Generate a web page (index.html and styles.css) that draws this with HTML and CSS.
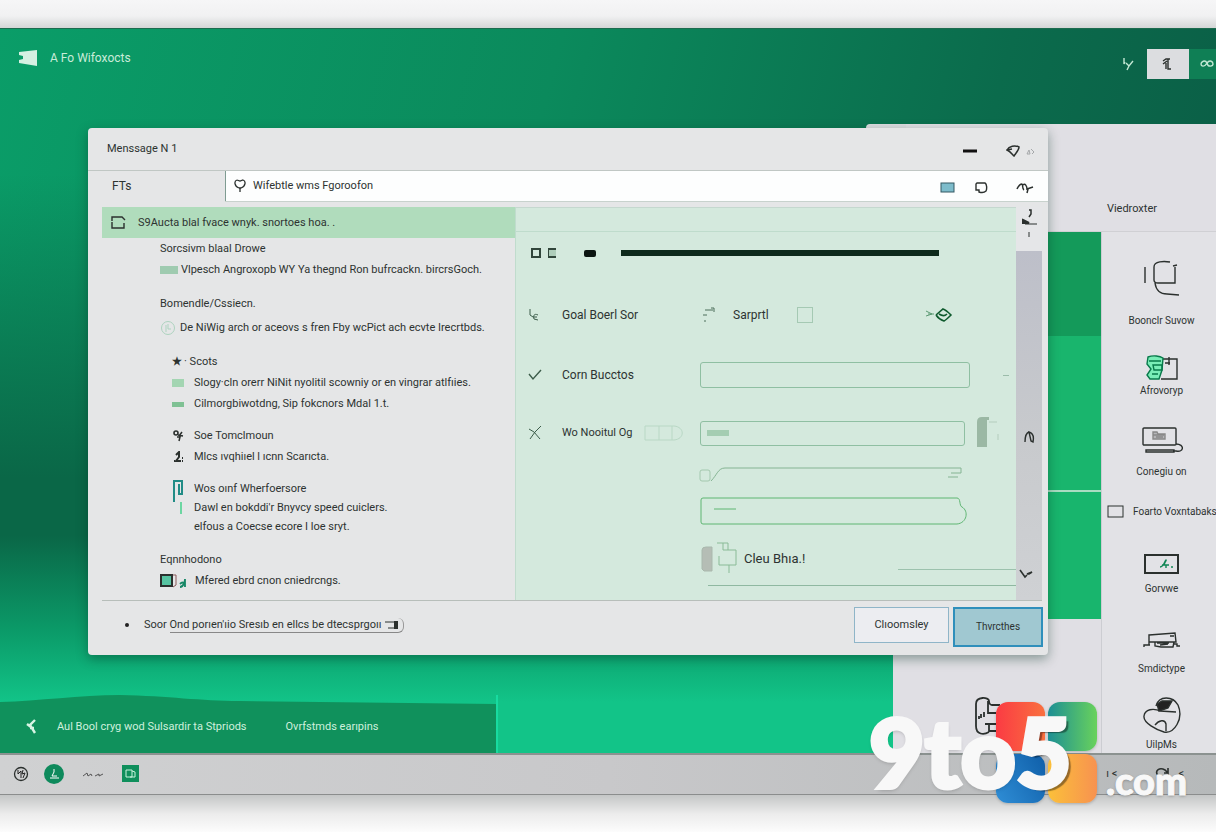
FILE: index.html
```html
<!DOCTYPE html>
<html lang="en">
<head>
<meta charset="utf-8">
<title>A Fo Wifoxocts</title>
<link rel="stylesheet" href="styles.css">
</head>
<body>
<main class="desk">
  <header class="desk-bar">
    <svg class="flag" width="20" height="16" viewBox="0 0 20 16"><path d="M1 2 19 0v16L1 13l0-3 4-1V6L1 5z" fill="#d5f0e2"/></svg>
    <span class="desk-title">A Fo Wifoxocts</span>
    <span class="spacer"></span>
    <button class="top-btn" aria-label="Check"><svg width="12" height="14" viewBox="0 0 12 14"><path d="M2 1v6l1-2M4 6l3 3 4-5M7 9l-2 4"/></svg></button>
    <button class="top-btn light" aria-label="Tools"><svg width="12" height="14" viewBox="0 0 12 14"><path d="M1 4l3-2h4M6 2v10h3M5 4l-4 3M4 6v6"/></svg></button>
    <button class="top-btn green" aria-label="Link"><svg width="14" height="12" viewBox="0 0 14 12"><path d="M7 5C5 1 1 4 1 6s3 4 6-1c3-4 6-1 6 1s-5 4-6-1"/></svg></button>
  </header>

  <section class="panel">
    <div class="panel-head"><span>Viedroxter</span></div>
    <div class="panel-left">
      <div class="tile tile-a"></div>
      <div class="tile tile-b"></div>
      <div class="item hidden-item">
        <svg width="30" height="38" viewBox="0 0 30 38"><path d="M26 8h-8c-1 0-3-1-3-4 0-4-13-5-13 3v22c0 9 8 9 13 6M14 4v12h8M11 27h14M15 27v7h10M5 19v3M7 17v4M10 20v-5" stroke-width="1.8"/></svg>
        <span>Hotxic</span>
      </div>
    </div>
    <div class="panel-right">
      <div class="item i1"><svg width="38" height="38" viewBox="0 0 38 38"><path d="M2 8v16M27 3c-6-1-16-1-16 5v13c0 2 1 3 4 3h17V8M30 7l4-1M12 24c1 7 5 11 12 11l12 1"/></svg><span>Boonclr Suvow</span></div>
      <div class="item i2"><svg width="34" height="26" viewBox="0 0 34 26"><path d="M16 4h16v20H16M24 2v8M20 8h5"/><path d="M3 2c5-2 12-1 15 1l-1 12-3 9H5l-3-4 4-6-4-5z" fill="#7aedb7" stroke="#087a4b"/><path d="M4 6h12M8 10h9v5H9zM7 19h6" stroke="#087a4b"/></svg><span>Afrovoryp</span></div>
      <div class="item i3"><svg width="42" height="28" viewBox="0 0 42 28"><rect x="2" y="2" width="33" height="17" rx="1"/><path d="M5 24h28v2H5zM35 18c9 0 8 9 0 7h-3"/><path d="M12 13V6h4l1 2h7v5zM12 9h11M15 11h7" stroke="#888" fill="#b5b5b8"/></svg><span>Conegiu on</span></div>
      <div class="wide"><svg width="18" height="13" viewBox="0 0 18 13"><rect x="1" y="1" width="15" height="11"/></svg><span>Foarto Voxntabaks</span></div>
      <div class="item i4"><svg width="36" height="20" viewBox="0 0 36 20"><rect x="1" y="1" width="33" height="18" stroke-width="2"/><path d="M16 13c4 0 5-7 6-7s-4 5 0 5v3M18 11h7M27 13h2" stroke="#118655"/></svg><span>Gorvwe</span></div>
      <div class="item i5"><svg width="38" height="20" viewBox="0 0 38 20"><path d="M6 4l26-2 1 9H6zM6 4v10M12 11v4l6 1h12l1-5M1 16v-2h6M31 13h3v2h3M14 12h12M27 5h4M17 14l8-1"/></svg><span>Smdictype</span></div>
      <div class="item i6"><svg width="40" height="38" viewBox="0 0 40 38"><path d="M14 10C17-1 31 0 36 9c6 14-4 29-14 27C15 34 1 27 2 20c1-7 9-8 17-5M13 29c4-5 10-6 11-1v7M18 15l16 1"/><path d="M15 8l5-3 10 0-4 7-9 3z" fill="#222"/></svg><span>UilpMs</span></div>
    </div>
  </section>

  <aside class="toast">
    <svg class="toast-shape" viewBox="0 0 497 58" preserveAspectRatio="none"><path d="M0 7C40 6 80 0 120 0c50 1 80 6 120 6l257 3v49H0z" fill="#10915c"/></svg>
    <svg class="toast-icon" width="14" height="16" viewBox="0 0 14 16"><path d="M10 1L5 6l5 8M2 5l4 3M5 9l4 0" stroke="#d8f5e4" stroke-width="2.4" fill="none"/></svg>
    <span>Aul Bool cryg wod Sulsardir ta Stpriods</span>
    <span class="toast-b">Ovrfstmds earıpins</span>
  </aside>

  <section class="dialog">
    <header class="title">
      <h1>Menssage N 1</h1>
      <button class="ic" aria-label="Minimize"><svg width="14" height="4" viewBox="0 0 14 4"><path d="M0 2h14" stroke="#111" stroke-width="3"/></svg></button>
      <button class="ic" aria-label="Filter"><svg width="15" height="12" viewBox="0 0 15 12"><path d="M1 5C3 1 9 0 13 2c0 3-3 6-5 9-2-2-4-5-7-6l5-1" stroke-width="1.5"/></svg></button>
      <button class="ic faint" aria-label="Home"><svg width="9" height="8" viewBox="0 0 9 8"><path d="M1 7l2-4 1 4H1M5 2l3 3-2 2"/></svg></button>
    </header>
    <div class="tools">
      <span class="tools-label">FTs</span>
      <label class="search">
        <svg width="12" height="14" viewBox="0 0 12 14"><path d="M5 9C0 7 0 2 3 1M3 1l3 1 3-1c3 1 3 6-2 8H5M6 9v4" stroke-width="1.3"/></svg>
        <input type="text" value="Wifebtle wms Fgoroofon" aria-label="Search">
      </label>
      <button class="ic" aria-label="Screen"><svg width="15" height="12" viewBox="0 0 15 12"><rect x="1" y="1" width="13" height="9" fill="#7dbccb" stroke="#345963"/></svg></button>
      <button class="ic" aria-label="Note"><svg width="13" height="12" viewBox="0 0 13 12"><path d="M2 1h8c2 1 2 6 1 8-2 2-4 2-7 1V8H1V2z" stroke-width="1.4"/></svg></button>
      <button class="ic" aria-label="Sign"><svg width="18" height="12" viewBox="0 0 18 12"><path d="M1 7c2-4 4-5 5-5s0 5 2 6M7 3c2-2 4 1 4 4l6-2M12 7l-1 4" stroke-width="1.5"/></svg></button>
    </div>

    <div class="body">
      <div class="tree">
        <div class="tree-head"><svg width="15" height="13" viewBox="0 0 15 13"><path d="M1 5V1h10l3 3M1 6v6h12V7" stroke-width="1.4"/></svg><span>S9Aucta blal fvace wnyk. snortoes hoa. .</span></div>
        <ul class="group"><li>Sorcsivm blaal Drowe</li><li><i class="bar"></i>Vlpesch Angroxopb WY Ya thegnd Ron bufrcackn. bircrsGoch.</li></ul>
        <ul class="group wide-gap"><li>Bomendle/Cssiecn.</li><li><svg class="clock" width="16" height="16" viewBox="0 0 16 16"><circle cx="8" cy="8" r="6.5"/><path d="M8 4v5h3M6 5v7"/></svg>De NiWig arch or aceovs s fren Fby wcPict ach ecvte Irecrtbds.</li></ul>
        <ul class="group in"><li><b class="star">★</b>· Scots</li><li><i class="bar mid"></i>Slogy·cln orerr NiNit nyolitil scowniy or en vingrar atlfıies.</li><li><i class="bar thin"></i>Cilmorgbiwotdng, Sip fokcnors Mdal 1.t.</li></ul>
        <ul class="group in"><li><svg class="gl" width="12" height="12" viewBox="0 0 12 12"><circle cx="4" cy="3" r="2" stroke-width="1.6"/><path d="M7 6l3-4M6 5l5 1M5 7l3 0-1 4" stroke-width="1.5"/></svg>Soe Tomclmoun</li><li><svg class="gl" width="12" height="12" viewBox="0 0 12 12"><path d="M4 4l3-3v5L4 10h5M2 10h1M10 7h1M10 10h1" stroke-width="2"/></svg>Mlcs ıvqhiıel l ıcnn Scarıcta.</li></ul>
        <ul class="group in tight"><li><svg class="flagp" width="12" height="24" viewBox="0 0 12 24"><path d="M2 23V2h8v13H7V5" stroke="#218c86" stroke-width="2"/></svg>Wos oınf Wherfoersore</li><li><i class="tick"></i>Dawl en bokddi'r Bnyvcy speed cuiclers.</li><li>elfous a Coecse ecore I loe sryt.</li></ul>
        <ul class="group last"><li>Eqnnhodono</li><li><svg class="sq" width="27" height="15" viewBox="0 0 27 15"><rect x="1" y="1" width="11" height="11" fill="#56c3a1" stroke-width="2"/><path d="M13 1h3v10l-3 2" stroke="#8a5a5a"/><path d="M20 13c4 0 5-7 5-8v8M20 10c2-2 3-2 4 0" stroke="#168766" stroke-width="1.8"/></svg>Mfered ebrd cnon cniedrcngs.</li></ul>
      </div>

      <form class="form">
        <div class="strip"></div>
        <div class="bars"><i class="bx"></i><i class="bx pale"></i><i class="blk"></i><i class="line"></i></div>
        <div class="row">
          <svg class="lead" width="12" height="14" viewBox="0 0 12 14"><path d="M2 1v6l3 2M10 7c-4-2-5 1-4 4l4 1M5 9h4"/></svg>
          <label for="c1">Goal Boerl Sor</label>
          <div class="ctl split"><svg width="16" height="16" viewBox="0 0 16 16"><path d="M5 3h8M11 1h3v4M3 8h4M4 14h2" stroke="#4d6f5b"/></svg><label for="c1" class="mid-l">Sarprtl</label><input type="checkbox" id="c1" class="check"><svg class="eye" width="28" height="16" viewBox="0 0 28 16"><path d="M1 4l6 3-6 2M3 7h6" stroke="#5b9973"/><path d="M11 8l7-6c3 1 6 4 8 6-3 3-5 5-7 6-3-1-6-3-8-6M14 7c3 2 6 2 8 0" stroke-width="1.6" stroke="#0e5a2d"/></svg></div>
        </div>
        <div class="row">
          <svg class="lead" width="14" height="12" viewBox="0 0 14 12"><path d="M1 5l4 5 8-9" stroke-width="1.4"/></svg>
          <label for="t1">Corn Bucctos</label>
          <div class="ctl"><input id="t1" class="text" type="text"></div><i class="dash"></i>
        </div>
        <div class="row r3">
          <svg class="lead" width="14" height="16" viewBox="0 0 14 16"><path d="M1 4l5 3 6 7M13 1L7 7l-5 7"/></svg>
          <label for="t2">Wo Nooitul Og<svg class="pill" width="40" height="16" viewBox="0 0 40 16"><path d="M1 1h29c11 1 11 13 0 14H1zM15 1v14M28 1v14"/></svg></label>
          <div class="ctl"><input id="t2" class="text" type="text"><i class="fill"></i></div>
          <svg class="knob" width="24" height="34" viewBox="0 0 24 34"><path d="M1 31V6q0-5 5-5h7v3h-2v27z" fill="#9bb8a4"/><path d="M13 6h8M22 18v6" stroke="#b4cdbd"/></svg>
        </div>
        <svg class="tabline" viewBox="0 0 266 16" preserveAspectRatio="none"><rect x="1" y="3" width="10" height="11" rx="2" stroke="#a3c8ae"/><path d="M12 14C18 8 19 1 26 1h236v5h-10M249 10h10" stroke="#85b493"/></svg>
        <div class="odd"><svg viewBox="0 0 270 28" preserveAspectRatio="none"><path d="M3 1h254c4 0 2 8 5 9 7 4 5 16-5 17H3q-2 0-2-2V3q0-2 2-2M14 12h22" stroke="#5fb673"/></svg></div>
        <div class="foot-row"><svg width="38" height="34" viewBox="0 0 38 34"><path d="M2 27V8q0-3 4-3h6v24H4z" fill="#b5bdb5" stroke="#a9b8ad"/><path d="M17 1h11v7h8v15H19v-9M23 1v7h5M29 23v8" stroke="#8abb97"/></svg><span>Cleu Bhıa.!</span></div>
        <div class="rules"></div>
      </form>

      <div class="scroll">
        <svg width="18" height="36" viewBox="0 0 18 36"><path d="M3 13l6 3H3z" fill="#222" stroke-width="2"/><path d="M9 3h2v4l-2 3" stroke-width="1.5"/><path d="M5 17h12M9 25v5"/></svg>
        <svg class="s2" width="12" height="14" viewBox="0 0 12 14"><path d="M2 12C2 6 3 3 6 2M6 2c4 1 5 5 4 10l-2-1z" stroke-width="1.4"/></svg>
        <svg class="s3" width="16" height="10" viewBox="0 0 16 10"><path d="M1 1l5 7 2-2M8 5l5-2-3 2z" stroke-width="1.6"/></svg>
      </div>
    </div>

    <footer class="foot">
      <span class="dot"></span>
      <span class="note">Soor <u>Ond porıen'ıio Sresıb en ellcs be dtecsprgoıı<svg width="14" height="8" viewBox="0 0 14 8"><path d="M0 1h11v6H3"/><path d="M11 0v8" stroke-width="4"/></svg></u></span>
      <button class="btn" type="button">Clıoomsley</button>
      <button class="btn primary" type="button">Thvrcthes</button>
    </footer>
  </section>
</main>

<nav class="taskbar">
  <svg width="16" height="16" viewBox="0 0 16 16"><circle cx="8" cy="8" r="6.5" stroke-width="1.3"/><path d="M5 4v4l3-3v7M10 4l-1 4 3-1-2 5" stroke="#222"/></svg>
  <span class="round"><svg width="12" height="12" viewBox="0 0 12 12"><path d="M6 1v3L4 8h5M2 10h9" stroke="#fff"/></svg></span>
  <svg width="22" height="6" viewBox="0 0 22 6"><path d="M1 5l4-3 1 3 3-2 1 2M13 5l4-2v2l4-2" stroke="#555"/></svg>
  <span class="app"><svg width="11" height="10" viewBox="0 0 11 10"><path d="M1 1h6v7H1zM7 2l3 1v5H5" stroke="#c8f3dc"/></svg></span>
  <span class="spacer"></span>
  <span class="tray">ı &lt;</span>
  <svg width="16" height="14" viewBox="0 0 16 14"><path d="M3 9C-1 3 5 0 10 3l3 3V1M13 6H9M6 8c-2 4 4 4 6 1" stroke-width="1.6"/></svg>
  <span class="lt">&lt;</span>
</nav>

<div class="brand">
  <div class="blocks"><i class="q1"></i><i class="q2"></i><i class="q3"></i><i class="q4"></i></div>
  <span class="brand-text">9to<span class="five">5</span></span>
  <span class="brand-com">.com</span>
</div>
</body>
</html>
```
FILE: styles.css
```css
* { box-sizing: border-box; }
body {
  margin: 0;
  min-height: 100vh;
  padding: 28px 0 37px;
  display: flex;
  flex-direction: column;
  position: relative;
  overflow: hidden;
  font: 11px/20px Roboto, "Liberation Sans", sans-serif;
  color: #2d3331;
  background: linear-gradient(#f6f6f7 0, #f1f1f2 16px, #d4d6d6 28px, #c4c6c6 calc(100% - 37px), #ececec calc(100% - 18px), #fcfcfc 100%);
}
svg { fill: none; stroke: #2b302e; flex: none; display: block; }
button { font: inherit; color: inherit; border: 0; background: none; padding: 0; display: flex; align-items: center; justify-content: center; }
ul { list-style: none; margin: 0; padding: 0; }
.spacer { flex: 1; }

.desk {
  flex: 1;
  position: relative;
  overflow: hidden;
  border-top: 1px solid #1d6b4e;
  background:
    linear-gradient(transparent 20%, #0a6747 62%, #0a6747 70%, #0b9a68 83%, #12c488 93%),
    linear-gradient(105deg, #0a9d68 0, #0b8a5c 40%, #0b6b4c 72%, #0b5843 100%);
}
.desk-bar { display: flex; align-items: center; height: 66px; padding: 0 0 8px 18px; }
.flag { stroke: none; }
.desk-title { margin-left: 12px; font-size: 12px; color: #c9ecd9; }
.top-btn { width: 38px; height: 30px; margin-top: 12px; }
.top-btn svg { stroke: #c3e8d4; stroke-width: 1.4; }
.top-btn.light { width: 42px; background: #dcdde0; }
.top-btn.light svg { stroke: #2b302e; }
.top-btn.green { width: 27px; background: #0f7f55; padding-left: 8px; }

.panel {
  position: absolute;
  top: 95px;
  right: 0;
  bottom: 0;
  width: 323px;
  display: grid;
  grid-template: 108px 1fr / 1fr 114px;
  background: #e0dfe4;
}
.panel::before {
  content: "";
  position: absolute;
  left: -27px;
  top: 0;
  width: 40px;
  height: 12px;
  border-radius: 4px 0 0 4px;
  background: #dcdce0;
}
.panel-head { grid-column: 1 / 3; display: flex; align-items: flex-end; justify-content: flex-end; padding: 0 59px 12px 0; border-bottom: 1px solid #d0d0d4; }
.panel-left { display: flex; flex-direction: column; border-right: 1px solid #cccdd2; }
.tile { height: 258px; background: linear-gradient(#149a5a 0 104px, #19b56d 104px); }
.tile-b { height: 129px; border-top: 2px solid #a9dcc1; background: #18b56d; }
.panel-right { display: flex; flex-direction: column; background: #e2e2e6; font-size: 10px; }
.item { display: flex; flex-direction: column; align-items: center; justify-content: flex-end; padding-left: 5px; }
.item svg { stroke-width: 1.4; }
.hidden-item { flex: 1; align-self: center; padding: 0 16px 0 0; font-size: 10px; }
.i1 { height: 99px; gap: 14px; }
.i2 { height: 70px; }
.i3 { height: 81px; gap: 8px; }
.i4 { height: 58px; gap: 5px; }
.i5 { height: 80px; gap: 8px; }
.i6 { height: 76px; gap: 1px; }
.wide { display: flex; align-items: center; gap: 8px; height: 59px; padding-left: 5px; white-space: nowrap; }

.toast {
  position: absolute;
  left: 0;
  bottom: 0;
  width: 498px;
  height: 58px;
  display: flex;
  align-items: center;
  padding: 6px 0 0 25px;
  color: #cff0dd;
  border-right: 2px solid #18dba0;
}
.toast-shape { position: absolute; inset: 0; width: 100%; height: 100%; stroke: none; }
.toast-icon, .toast span { position: relative; }
.toast span { margin-left: 18px; }
.toast .toast-b { margin-left: 39px; }

.dialog {
  position: absolute;
  left: 88px;
  right: 168px;
  top: 99px;
  display: flex;
  flex-direction: column;
  border-radius: 4px;
  background: #e5e6e7;
  box-shadow: 0 4px 12px #00302166;
}
.title { display: flex; align-items: center; height: 43px; padding: 3px 13px 0 19px; border-bottom: 1px solid #c0c7c4; }
.title h1 { flex: 1; margin: 0 0 4px; font-size: 11px; font-weight: 400; }
.title .ic:nth-of-type(2) { margin-left: 29px; }
.faint { margin-left: 5px; }
.faint svg { stroke: #a5a8aa; }
.tools { display: flex; align-items: center; height: 31px; padding-right: 14px; background: #fdfefe; border-bottom: 1px solid #c8d2cd; }
.tools-label { width: 137px; height: 31px; padding-left: 24px; line-height: 31px; font-size: 12px; background: #e5e6e7; align-self: flex-start; }
.search { flex: 1; display: flex; align-items: center; gap: 5px; height: 30px; padding-left: 8px; border-left: 1px solid #7f9c92; }
.search input { flex: 1; border: 0; background: none; font: inherit; color: inherit; outline: 0; }
.tools .ic { margin: 4px 0 0 20px; }
.tools .ic:last-child { margin-left: 28px; }

.body { display: grid; grid-template-columns: minmax(0, 413fr) minmax(0, 501fr) 26px; margin: 5px 6px 0 14px; border-bottom: 1px solid #b7beba; }
.tree { padding-bottom: 9px; white-space: nowrap; }
.tree-head { display: flex; align-items: center; gap: 12px; height: 31px; padding-left: 9px; margin-bottom: 1px; font-size: 11px; background: #b0dcbc; }
.group { display: flex; flex-direction: column; gap: 1px; padding-left: 58px; margin-bottom: 14px; }
.group.wide-gap { gap: 4px; }
.group.in { padding-left: 70px; margin-bottom: 12px; }
.group.tight { gap: 0; line-height: 19px; margin-bottom: 14px; }
.group.last { margin-bottom: 0; }
.group li { display: flex; align-items: center; }
.group.in li { padding-left: 22px; height: 20px; }
.group.in.tight li { height: 19px; }
.group.in li > :first-child { margin-left: -22px; }
.bar { width: 18px; height: 8px; margin-right: 3px; background: #9fcbb0; }
.group.in .bar { width: 12px; margin-right: 10px; background: #a3d5b2; }
.group.in .bar.thin { height: 5px; background: #7fc194; }
.clock { stroke: #add3bf; margin-right: 4px; }
.group.in .star { margin-right: 2px; }
.gl { margin-right: 10px; }
.flagp { margin-right: 10px; align-self: flex-start; }
.tick { width: 2px; height: 12px; margin: 0 12px 0 8px; background: #6cd6a2; }
.group.in.tight .tick { margin-left: -14px; }
.sq { margin-right: 8px; }

.form { display: flex; flex-direction: column; background: #d4e9dd; border-left: 1px solid #c0dccd; }
.strip { height: 25px; border-bottom: 1px solid #bfdccc; border-top: 1px solid #c5d8cf; }
.bars { display: flex; align-items: center; height: 42px; margin-bottom: 11px; padding-left: 15px; }
.bx { width: 10px; height: 10px; border: 2px solid #31463b; }
.bx.pale { width: 8px; margin-left: 7px; border-width: 2px 0 2px 1px; background: #aecdba; }
.blk { width: 12px; height: 7px; margin-left: 28px; border-radius: 2px; background: #0b1511; }
.line { flex: 1; height: 6px; margin: 0 77px 0 25px; background: #0e2a1c; }
.row { display: grid; grid-template-columns: 34px 138px 270px 1fr; align-items: center; height: 60px; padding-left: 12px; font-size: 12px; }
.row.r3 { height: 56px; font-size: 11px; }
.row > label { display: flex; align-items: center; white-space: nowrap; }
.lead { stroke: #3c5c4a; }
.ctl { display: flex; align-items: center; position: relative; }
.mid-l { margin-left: 17px; }
.check { appearance: none; width: 16px; height: 16px; margin: 0 0 0 28px; border: 1px solid #a5c9b3; }
.eye { margin-left: auto; margin-right: 17px; }
.text { width: 100%; height: 26px; border: 1px solid #8fbfa2; border-radius: 3px; background: none; padding: 0 8px; }
.r3 .text { width: 265px; height: 25px; }
.fill { position: absolute; left: 7px; top: 9px; width: 22px; height: 6px; background: #a4cdb2; }
.dash { width: 6px; height: 1px; margin-left: 33px; background: #9bbcaa; }
.pill { stroke: #b9d8c5; margin-left: 12px; }
.knob { margin-left: 6px; stroke: none; }
.tabline { height: 16px; width: 266px; margin: 6px 0 0 183px; }
.odd { margin: 14px 0 0 184px; width: 270px; }
.odd svg { width: 100%; height: 28px; }
.foot-row { display: flex; align-items: center; gap: 6px; margin: 17px 0 0 184px; font-size: 13px; }
.rules { height: 17px; margin: -7px 0 0 192px; border-bottom: 1px solid #8fb8a1; background: linear-gradient(#9cc2ad, #9cc2ad) right 0 / 118px 1px no-repeat; }

.scroll { display: flex; flex-direction: column; align-items: center; background: linear-gradient(#e5e6e8 44px, #bdbfc9 44px, #c8cacd 60%, #cfd1d4); }
.s2 { margin-top: 187px; }
.s3 { margin-top: 125px; margin-right: 4px; }

.foot { display: flex; align-items: center; height: 54px; padding: 0 5px 7px 37px; }
.dot { width: 4px; height: 4px; border-radius: 50%; background: #222; }
.note { flex: 1; margin-left: 15px; white-space: nowrap; }
.note u { display: inline-flex; align-items: center; gap: 4px; line-height: 14px; text-decoration: none; border-bottom: 1px solid #888; border-right: 1px solid #999; border-radius: 0 6px 6px 0; padding-right: 4px; }
.btn { width: 95px; height: 36px; margin-right: 4px; border: 1px solid #8fb5c8; background: #ecedf1; font-size: 11px; }
.btn.primary { width: 90px; height: 40px; margin: 4px 0 0; border: 2px solid #2f8fbb; background: #a0c8d1; font-size: 10px; }

.taskbar {
  display: flex;
  align-items: center;
  height: 42px;
  padding: 0 32px 2px 13px;
  border-top: 2px solid #8b9290;
  border-bottom: 1px solid #8b8d8d;
  background: linear-gradient(90deg, #d0d1d2, #c8c8ca 50%, #b6b9ba);
}
.round { display: flex; align-items: center; justify-content: center; width: 20px; height: 20px; margin: 0 18px 0 15px; border-radius: 50%; background: #0e8a5c; }
.app { display: flex; align-items: center; justify-content: center; width: 17px; height: 17px; margin-left: 18px; background: #0f8f5c; }
.tray { margin-right: 38px; }
.lt { margin-left: 7px; }

.brand { position: absolute; right: 29px; bottom: 27px; width: 318px; height: 106px; color: #f8f8f8; font-family: Lato, sans-serif; font-weight: 900; }
.blocks { position: absolute; left: 127px; top: 3px; display: grid; grid-template-columns: 49px 49px; gap: 3px; }
.blocks i { height: 49px; border-radius: 12px; box-shadow: 0 1px 3px #0003; }
.q1 { background: linear-gradient(90deg, #fb3b43, #f9703f); }
.q2 { background: linear-gradient(90deg, #1d8f94, #69d25c); }
.q3 { background: linear-gradient(60deg, #2f8ed6, #0f5ea8); }
.q4 { background: linear-gradient(90deg, #fbc03a, #f79250); }
.brand-text { position: absolute; left: 0; bottom: 5px; font-size: 96px; line-height: 98px; -webkit-text-stroke: 4px #f8f8f8; text-shadow: 0 2px 4px #0004; }
.five { text-shadow: 4px 3px 1px #0006; }
.brand-com { position: absolute; right: 0; bottom: 6px; font-size: 38px; line-height: 38px; -webkit-text-stroke: 1px #f8f8f8; text-shadow: 0 1px 3px #0005; }
```
